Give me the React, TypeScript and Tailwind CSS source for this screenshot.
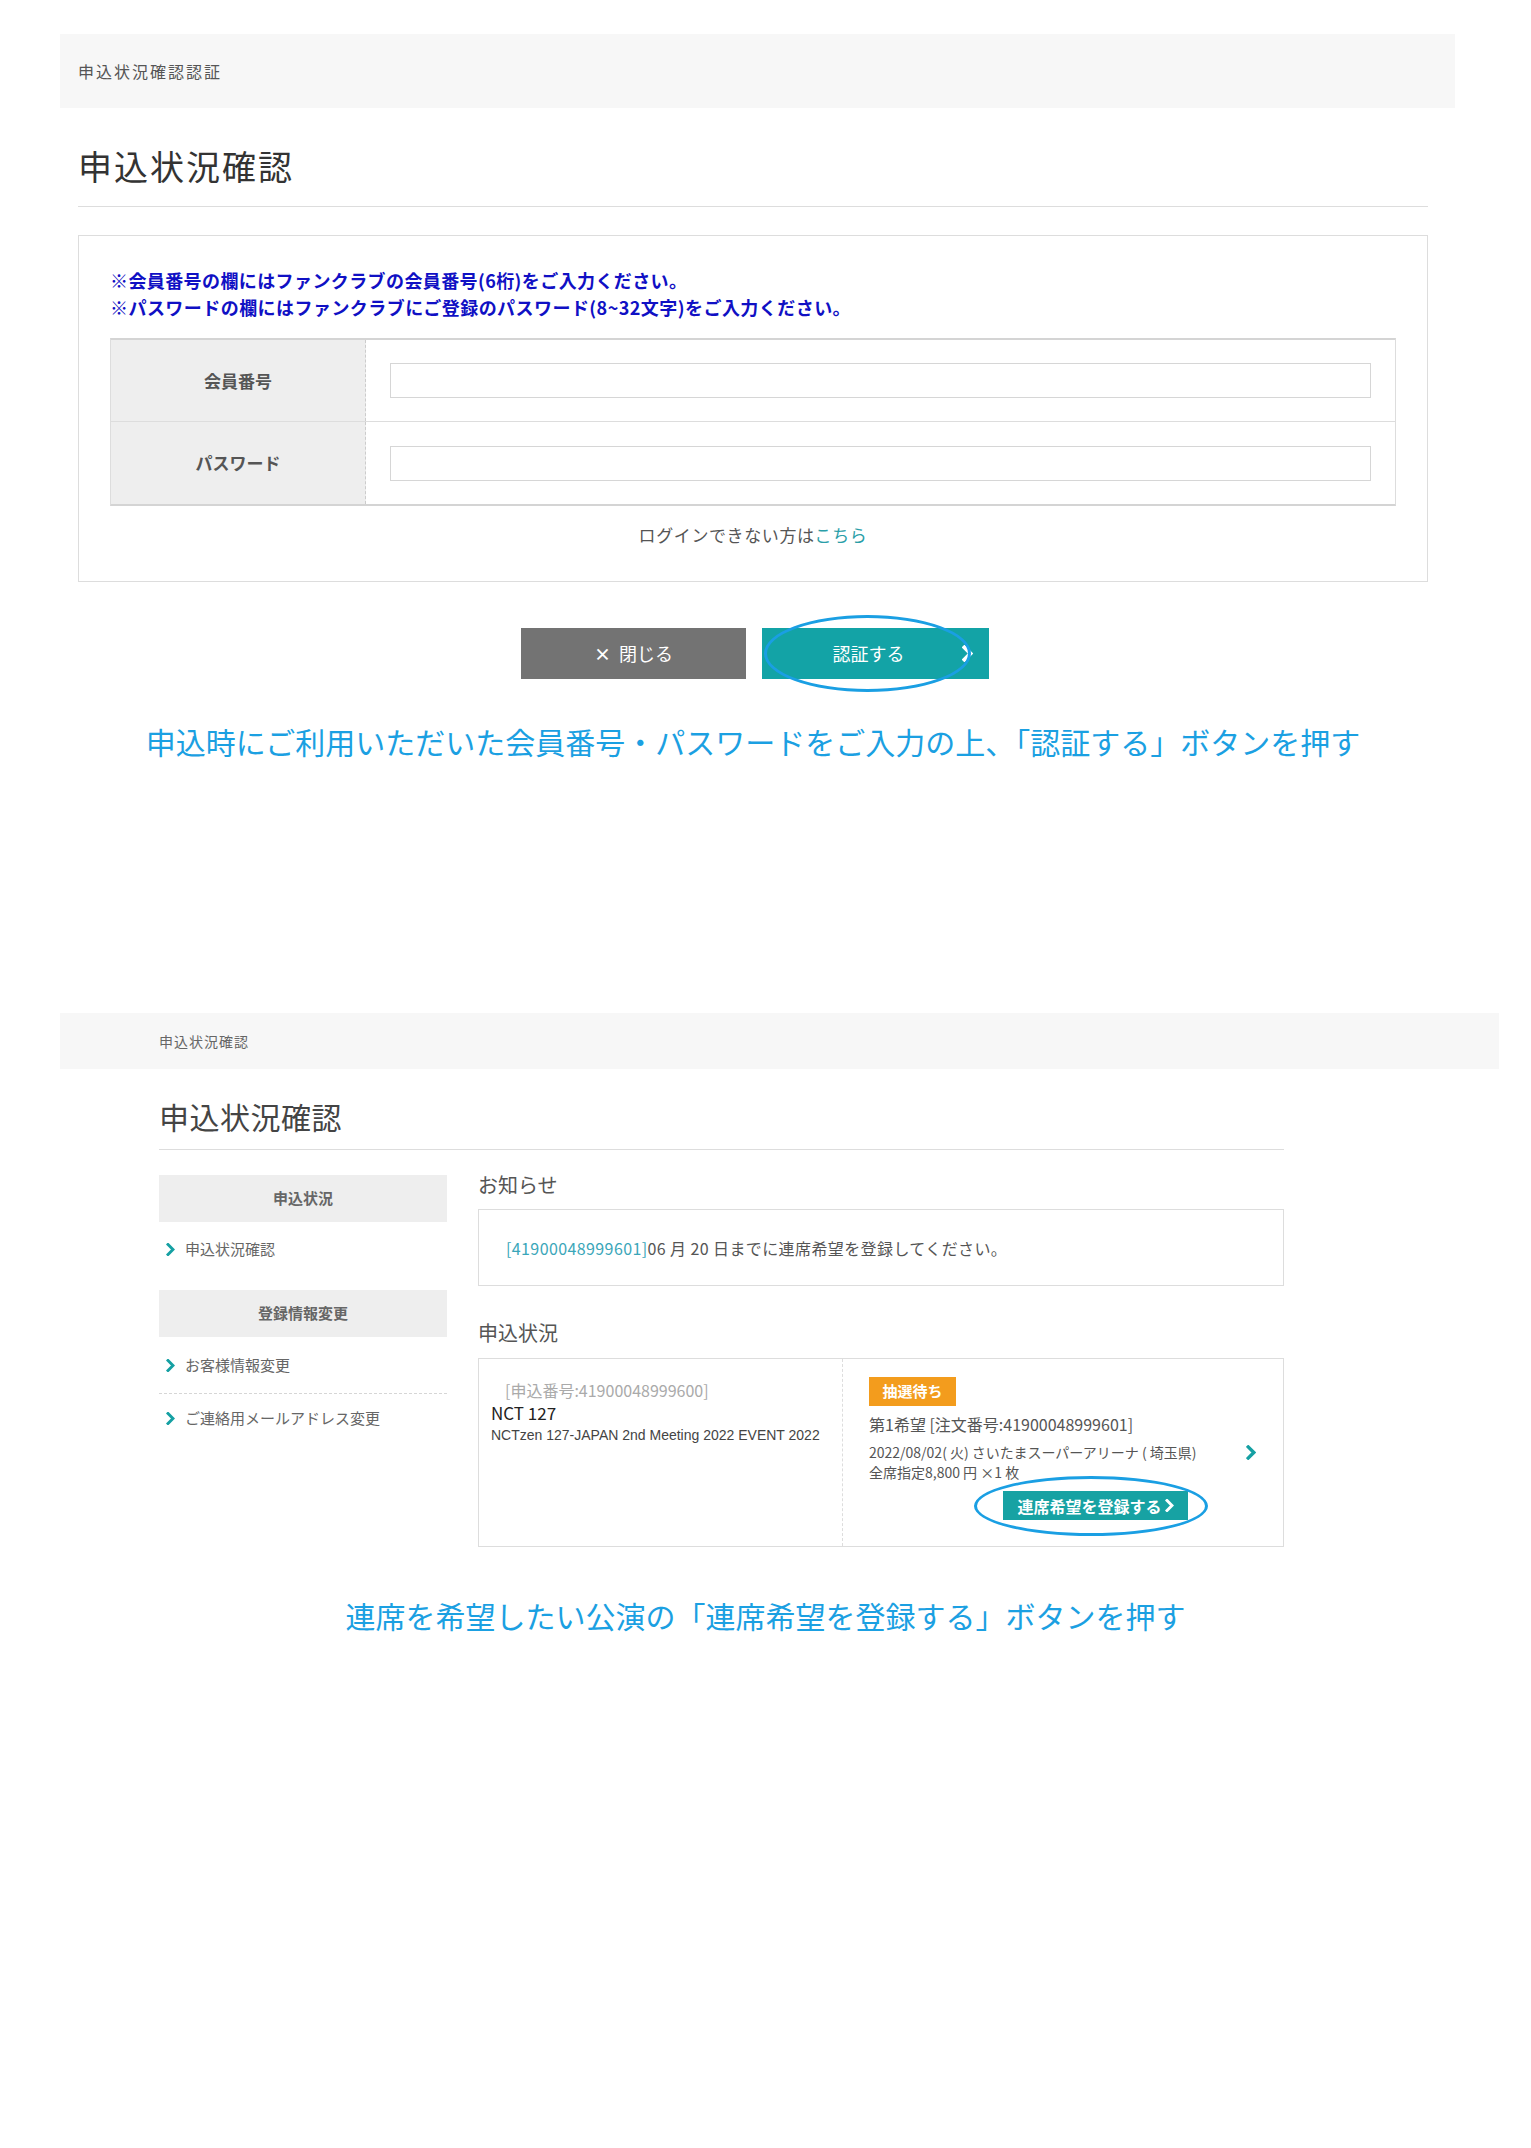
import React from 'react';

const jp = { fontFamily: '"Noto Sans CJK JP", "Noto Sans", sans-serif' };

const Chevron: React.FC<{ className?: string; w?: number; h?: number; sw?: number }> = ({
  className,
  w = 9,
  h = 13,
  sw = 3,
}) => (
  <svg width={w} height={h} viewBox="0 0 9 13" className={className} fill="none">
    <path d="M2 1.5 L7 6.5 L2 11.5" stroke="currentColor" strokeWidth={sw} strokeLinecap="square" />
  </svg>
);

const Ellipse: React.FC<{ className: string }> = ({ className }) => (
  <div className={`pointer-events-none absolute rounded-[50%] border-[3px] border-[#1a9fe3] ${className}`} />
);

const AuthSection = () => (
  <section className="pt-[34px] pl-[60px]">
    <div className="flex h-[74px] w-[1395px] items-center bg-[#f7f7f7] pl-[18px] text-[16px] tracking-[2px] text-[#555]">
      申込状況確認認証
    </div>

    <div className="ml-[18px] w-[1350px]">
      <h1 className="mt-[37px] border-b border-[#ddd] pb-[19px] text-[34px] leading-[42px] tracking-[2px] text-[#333]">
        申込状況確認
      </h1>

      <div className="mt-[28px] border border-[#ddd] px-[31px] pt-[31px] pb-[34px]">
        <p className="text-[18px] font-bold leading-[27px] tracking-[0.4px] text-[#1010c4]">
          ※会員番号の欄にはファンクラブの会員番号(6桁)をご入力ください。
        </p>
        <p className="text-[18px] font-bold leading-[27px] tracking-[0.45px] text-[#1010c4]">
          ※パスワードの欄にはファンクラブにご登録のパスワード(8~32文字)をご入力ください。
        </p>

        <div className="mt-[17px] border border-y-2 border-[#ddd] border-y-[#d4d4d4]">
          {['会員番号', 'パスワード'].map((label, i) => (
            <div key={label} className={`flex h-[82px] ${i === 0 ? 'border-b border-[#ddd]' : ''}`}>
              <div className="flex w-[255px] items-center justify-center border-r border-dashed border-[#ccc] bg-[#eeeeee] text-[17px] font-bold text-[#555]">
                {label}
              </div>
              <div className="flex flex-1 items-center px-[24px]">
                <input className="h-[35px] w-full border border-[#d6d6d6] bg-white outline-none" />
              </div>
            </div>
          ))}
        </div>

        <p className="mt-[17px] text-center text-[17px] leading-[24px] tracking-[0.6px] text-[#555]">
          ログインできない方は<span className="text-[#2a9ea8]">こちら</span>
        </p>
      </div>

      <div className="mt-[46px] flex justify-center gap-[16px] pl-[4px]">
        <button className="flex h-[51px] w-[225px] items-center justify-center gap-[8px] bg-[#737373] text-[18px] text-white">
          <span className="text-[17px] font-bold">×</span>
          <span>閉じる</span>
        </button>
        <div className="relative">
          <button className="relative flex h-[51px] w-[227px] items-center justify-center bg-[#13a3a6] pr-[14px] text-[18px] text-white">
            認証する
            <Chevron className="absolute right-[16px] top-[17px] text-white" w={11} h={17} sw={3.2} />
          </button>
          <Ellipse className="left-[2px] top-[-13px] h-[77px] w-[207px]" />
        </div>
      </div>

      <p className="mt-[42px] text-center text-[30px] leading-[40px] text-[#1ba0e2]">
        申込時にご利用いただいた会員番号・パスワードをご入力の上、「認証する」ボタンを押す
      </p>
    </div>
  </section>
);

const SideHeader: React.FC<{ children: React.ReactNode; className?: string }> = ({ children, className }) => (
  <div className={`flex h-[47px] items-center justify-center bg-[#eeeeee] text-[15px] font-bold text-[#666] ${className ?? ''}`}>
    {children}
  </div>
);

const SideItem: React.FC<{ children: React.ReactNode; className?: string }> = ({ children, className }) => (
  <div className={`flex items-center gap-[10px] pl-[7px] text-[15px] text-[#666] ${className ?? ''}`}>
    <Chevron className="text-[#15a0a3]" w={9} h={13} sw={3} />
    {children}
  </div>
);

const StatusSection = () => (
  <section className="mt-[252px] pl-[60px]">
    <div className="flex h-[56px] w-[1439px] items-center bg-[#f7f7f7] pl-[99px] text-[14px] tracking-[1px] text-[#666]">
      申込状況確認
    </div>

    <div className="ml-[99px] w-[1125px]">
      <h1 className="mt-[29px] border-b border-[#ddd] pb-[15px] text-[30px] leading-[36px] tracking-[0.5px] text-[#444]">
        申込状況確認
      </h1>

      <div className="flex items-start gap-[31px]">
        <aside className="mt-[25px] w-[288px]">
          <SideHeader>申込状況</SideHeader>
          <SideItem className="h-[54px]">申込状況確認</SideItem>
          <SideHeader className="mt-[14px]">登録情報変更</SideHeader>
          <SideItem className="h-[57px] border-b border-dashed border-[#d6d6d6]">お客様情報変更</SideItem>
          <SideItem className="h-[48px]">ご連絡用メールアドレス変更</SideItem>
        </aside>

        <div className="mt-[21px] flex-1">
          <h2 className="text-[20px] leading-[28px] text-[#555]">お知らせ</h2>
          <div className="mt-[10px] flex h-[77px] items-center border border-[#ddd] pl-[27px] text-[16px] tracking-[0.4px] text-[#555]">
            <span className="text-[#3aa6b9]">[41900048999601]</span>
            <span>06 月 20 日までに連席希望を登録してください。</span>
          </div>

          <h2 className="mt-[33px] text-[20px] leading-[28px] text-[#555]">申込状況</h2>
          <div className="mt-[11px] flex h-[189px] border border-[#ddd]">
            <div className="w-[364px] border-r border-dashed border-[#ddd] pl-[12px] pt-[20px]">
              <p className="ml-[14px] text-[16px] leading-[22px] text-[#aaa]">[申込番号:41900048999600]</p>
              <p className="text-[17px] leading-[24px] text-[#222]">NCT 127</p>
              <p
                className="text-[14px] leading-[20px] text-[#444]"
                style={{ fontFamily: '"Liberation Sans", Arial, sans-serif' }}
              >
                NCTzen 127-JAPAN 2nd Meeting 2022 EVENT 2022
              </p>
            </div>

            <div className="flex flex-1 items-center pr-[27px]">
              <div className="flex-1 self-start pl-[26px] pt-[18px]">
                <span className="flex h-[29px] w-[87px] items-center justify-center bg-[#f39c1d] text-[15px] font-bold text-white">
                  抽選待ち
                </span>
                <p className="mt-[7px] text-[16px] leading-[22px] text-[#555]">第1希望 [注文番号:41900048999601]</p>
                <p className="mt-[7px] text-[14px] leading-[20px] text-[#555]">
                  2022/08/02( 火) さいたまスーパーアリーナ ( 埼玉県)
                </p>
                <p className="text-[14px] leading-[20px] text-[#555]">全席指定8,800 円 ×1 枚</p>
                <div className="relative ml-[134px] mt-[9px] w-[185px]">
                  <button className="flex h-[29px] w-[185px] items-center justify-center gap-[3px] bg-[#17a2a3] text-[16px] font-bold text-white">
                    連席希望を登録する
                    <Chevron className="text-white" w={9} h={13} sw={3} />
                  </button>
                  <Ellipse className="left-[-29px] top-[-15px] h-[60px] w-[234px]" />
                </div>
              </div>
              <Chevron className="text-[#15a0a3]" w={10} h={15} sw={3} />
            </div>
          </div>
        </div>
      </div>
    </div>

    <p className="ml-[-60px] mt-[48px] w-[1531px] text-center text-[30px] leading-[40px] text-[#1ba0e2]">
      連席を希望したい公演の「連席希望を登録する」ボタンを押す
    </p>
  </section>
);

export default function App() {
  return (
    <div className="min-h-[2148px] w-[1531px] bg-white" style={jp}>
      <AuthSection />
      <StatusSection />
    </div>
  );
}
